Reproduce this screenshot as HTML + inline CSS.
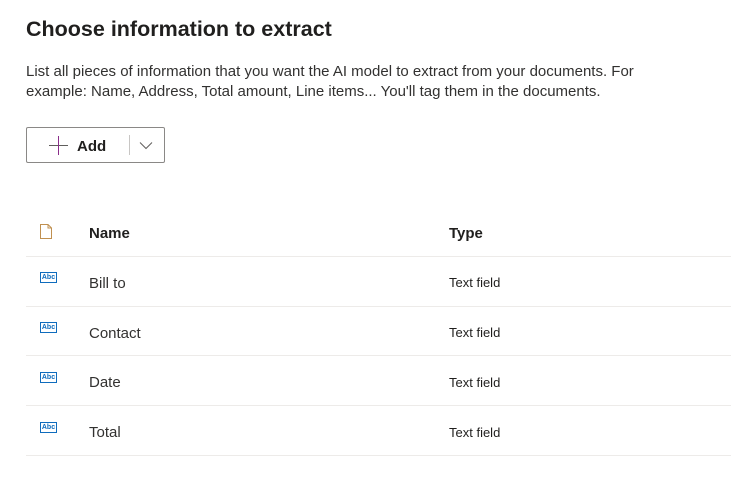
<!DOCTYPE html><html><head><style>
body{margin:0;width:731px;height:489px;background:#fff;font-family:"Liberation Sans",sans-serif;color:#323130;position:relative;overflow:hidden}
.a{position:absolute}
h1{position:absolute;left:26px;top:17px;margin:0;font-size:21.5px;font-weight:600;color:#201f1e}
p{position:absolute;left:26px;top:62px;margin:0;font-size:15px;line-height:20px;color:#323130;width:650px}
.btn{left:26px;top:127px;width:137px;height:34px;border:1px solid #8a8886;border-radius:2px}
.line{left:26px;width:705px;height:1px;background:#edebe9}
.nm{left:89px;font-size:15px}
.ty{left:449px;font-size:13px;color:#201f1e}
.abc{left:40px;width:15px;height:9px;border:1px solid #0f6cbd;font-size:7px;line-height:9px;text-align:center;color:#0f6cbd;font-weight:bold}
</style></head><body>
<h1>Choose information to extract</h1>
<p>List all pieces of information that you want the AI model to extract from your documents. For example: Name, Address, Total amount, Line items... You'll tag them in the documents.</p>
<div class="a btn">
 <div class="a" style="left:22px;top:17px;width:19px;height:1px;background:#605e5c"></div>
 <div class="a" style="left:31px;top:8px;width:1px;height:19px;background:#8a2d8a"></div>
 <div class="a" style="left:50px;top:10px;font-size:15px;font-weight:bold;color:#201f1e">Add</div>
 <div class="a" style="left:102px;top:7px;width:1px;height:20px;background:#c8c6c4"></div>
 <svg class="a" style="left:112px;top:13px" width="14" height="9"><path d="M1 1.5L7 7.5L13 1.5" fill="none" stroke="#605e5c" stroke-width="1"/></svg>
</div>
<svg class="a" style="left:39px;top:223px" width="14" height="17"><path d="M1.5 1.5H9L12.5 5V15.5H1.5Z M9 1.5V5H12.5" fill="none" stroke="#c09050" stroke-width="1"/></svg>
<div class="a nm" style="top:225px;font-weight:bold;font-size:15px;color:#201f1e">Name</div>
<div class="a nm" style="left:449px;top:225px;font-weight:bold;font-size:15px;color:#201f1e">Type</div>
<div class="a line" style="top:256px"></div>
<div class="a abc" style="top:272px">Abc</div><div class="a nm" style="top:275px">Bill to</div><div class="a ty" style="top:275px">Text field</div>
<div class="a line" style="top:306px"></div>
<div class="a abc" style="top:322px">Abc</div><div class="a nm" style="top:325px">Contact</div><div class="a ty" style="top:325px">Text field</div>
<div class="a line" style="top:355px"></div>
<div class="a abc" style="top:372px">Abc</div><div class="a nm" style="top:374px">Date</div><div class="a ty" style="top:375px">Text field</div>
<div class="a line" style="top:405px"></div>
<div class="a abc" style="top:422px">Abc</div><div class="a nm" style="top:424px">Total</div><div class="a ty" style="top:425px">Text field</div>
<div class="a line" style="top:455px"></div>
</body></html>
